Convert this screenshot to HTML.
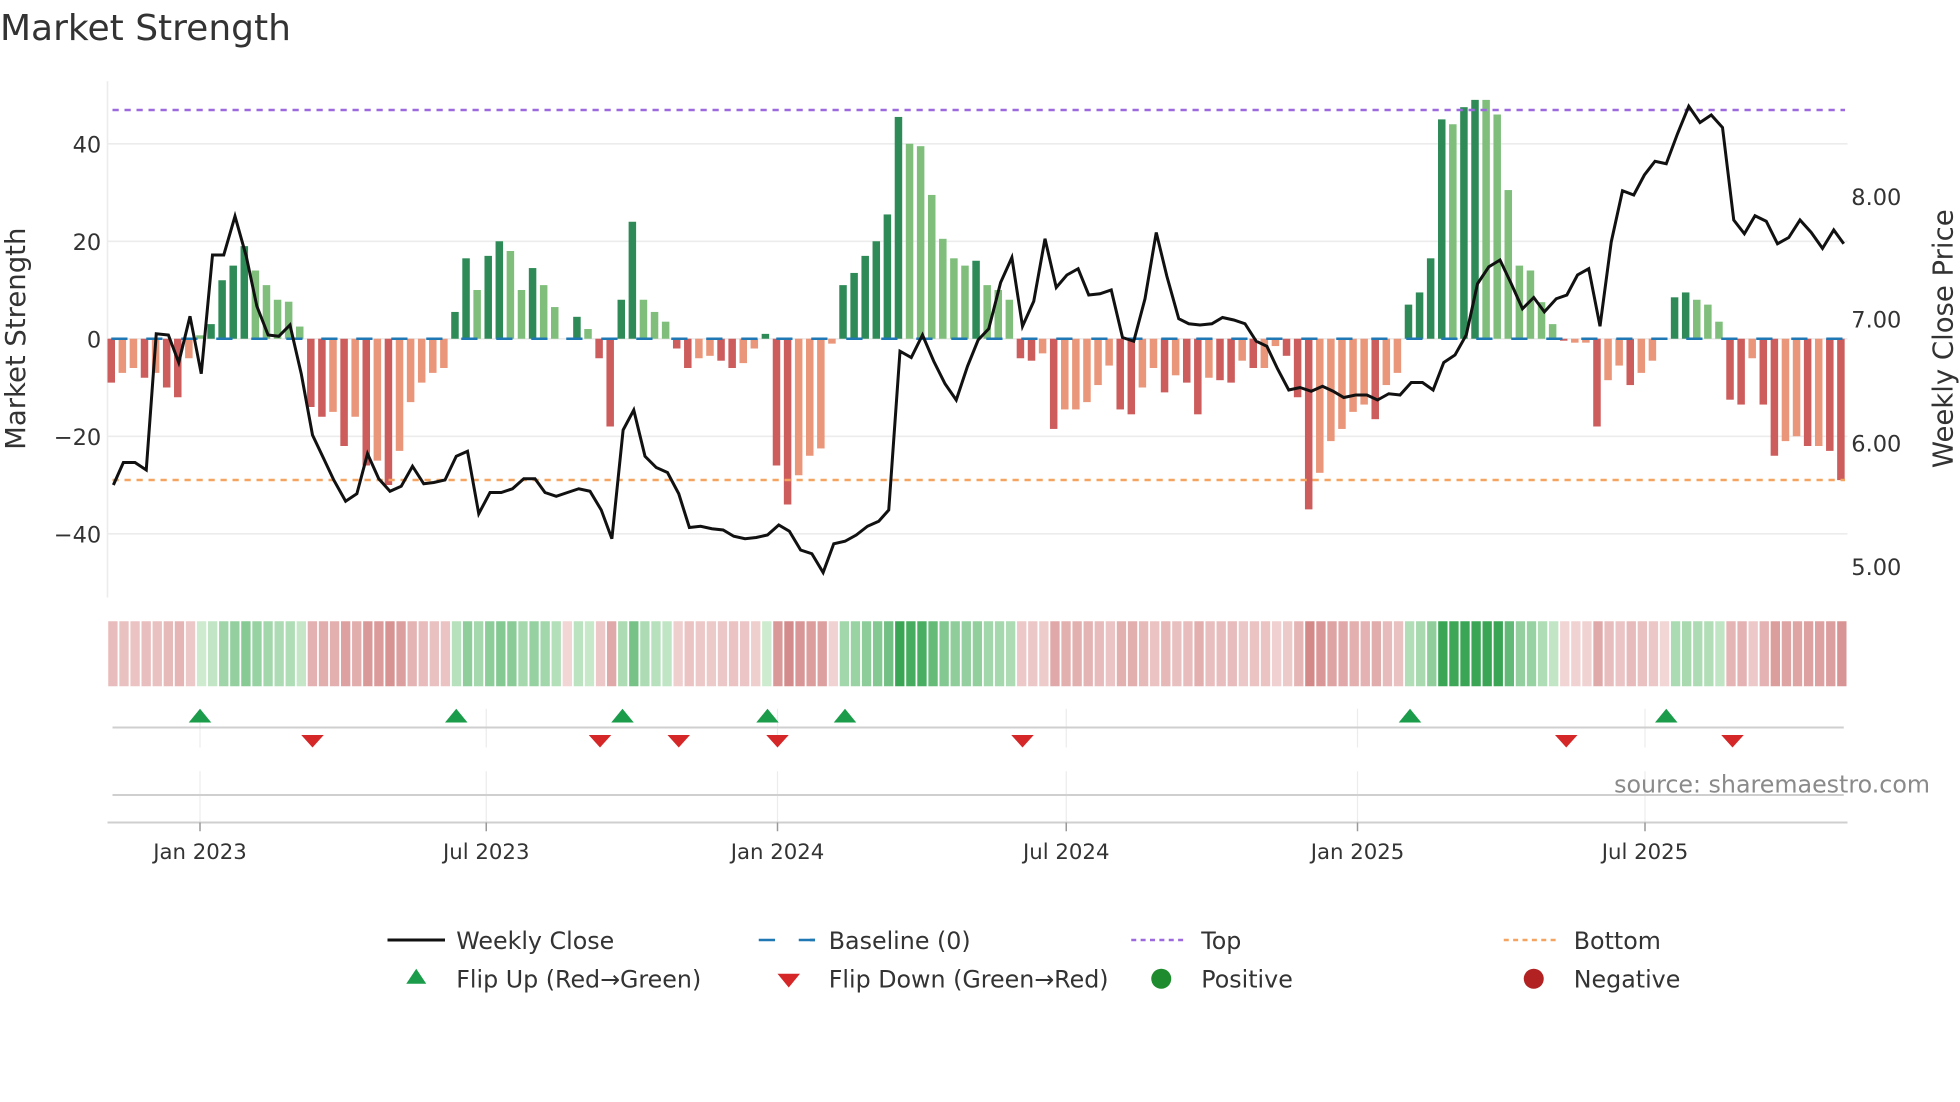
<!DOCTYPE html>
<html><head><meta charset="utf-8"><style>
html,body{margin:0;padding:0;background:#fff;}
svg{display:block;font-family:"DejaVu Sans","Liberation Sans",sans-serif;}
</style></head><body>
<svg id="s" width="1960" height="1102" viewBox="0 0 1568 881.6" xmlns="http://www.w3.org/2000/svg">
<rect width="1568" height="882" fill="#fff"/>
<text x="0" y="32" font-size="28.8" fill="#333">Market Strength</text>
<g stroke="#ececec" stroke-width="1.3">
<line x1="86" y1="115" x2="1478" y2="115"/><line x1="86" y1="193" x2="1478" y2="193"/>
<line x1="86" y1="271" x2="1478" y2="271"/><line x1="86" y1="349" x2="1478" y2="349"/>
<line x1="86" y1="427" x2="1478" y2="427"/>
<line x1="86" y1="65" x2="86" y2="478"/>
</g>
<g font-size="18" fill="#333" text-anchor="end">
<text x="81" y="122">40</text><text x="81" y="200">20</text><text x="81" y="278">0</text>
<text x="81" y="356">−20</text><text x="81" y="434">−40</text>
</g>
<g font-size="18" fill="#333">
<text x="1481" y="164">8.00</text><text x="1481" y="262">7.00</text>
<text x="1481" y="361">6.00</text><text x="1481" y="460">5.00</text>
</g>
<text transform="translate(20,271) rotate(-90)" font-size="22" fill="#333" text-anchor="middle">Market Strength</text>
<text transform="translate(1562,271) rotate(-90)" font-size="22" fill="#333" text-anchor="middle">Weekly Close Price</text>
<g id="bars"></g>
<line x1="89" y1="271" x2="1476" y2="271" stroke="#1f77b4" stroke-width="2" stroke-dasharray="13 15"/>
<line x1="90" y1="88" x2="1476" y2="88" stroke="#9c6ade" stroke-width="2" stroke-dasharray="5 4.6"/>
<line x1="90" y1="384" x2="1476" y2="384" stroke="#f4a460" stroke-width="2" stroke-dasharray="5 4.6"/>
<polyline fill="none" stroke="#111" stroke-width="2.4" stroke-linejoin="miter" points="90.7,388 98.7,370 108,370 117,376 125,267 134.7,268 143,290 152,253 161,299 170,204 179,204 188,173 197,205 205.5,245 214.5,268 223,269 232,260 241,299 250,348 259,367 267,384 276.5,401 285.5,395 294,363 303,383 312,393 321,389 330,373 339,387 347,386 356,384 365,365 374,361 383,411 392,394 401,394 410,391 419,383 428,383 436,394 445,397 454,394 463,391 472,393 481,408 489.5,431 498.5,344 507,328 516,365 525,374 534,378 543,395 551.5,422 560.5,421 569.5,423 578.5,424 587,429 596,431 605,430 614,428 623,420 631.5,425 640.5,440 649.5,443 658.5,458 667,435 676,433 685,428 694,421 703,417 711,408 720,281 729,286 738,268 747,289 756,307 765,320 774,293 782.5,272 791,263 800.5,226 809.5,206 818,261 827,241 836,191 845,230 853.5,220 862.5,215 871,236 880,235 889,232 898,270 907,273 916,239 925,186 933.5,221 943,255 951,259 960,260 969.5,259 978,254 987,256 996,259 1005,273 1013.5,277 1022,295 1031,312 1040,310 1049,313 1058,309 1066.5,313 1075,318 1084.5,316 1093.5,316 1102,320 1111,315 1120,316 1129,306 1138,306 1146.5,312 1155,290 1164,284 1173,268 1182,227 1191,213.5 1200,208 1209,227 1218,247 1227,238 1235.5,249.5 1245,239 1253.5,236 1262,220 1271,215 1280,261 1289,193.5 1298,152.6 1307,156 1315.5,140 1324,129 1333,131 1342,107 1351,85 1360,98 1369,92 1378,102 1387,176 1395.5,187 1404,172.6 1413,177 1422,195 1431,190 1440,176 1449,186 1458,198.7 1467,184 1475,195"/>
<g id="strip"></g>
<g stroke="#ececec" stroke-width="1">
<line x1="160" y1="567" x2="160" y2="598"/><line x1="389" y1="567" x2="389" y2="598"/>
<line x1="622" y1="567" x2="622" y2="598"/><line x1="853" y1="567" x2="853" y2="598"/>
<line x1="1086" y1="567" x2="1086" y2="598"/><line x1="1316" y1="567" x2="1316" y2="598"/>
<line x1="160" y1="617" x2="160" y2="658"/><line x1="389" y1="617" x2="389" y2="658"/>
<line x1="622" y1="617" x2="622" y2="658"/><line x1="853" y1="617" x2="853" y2="658"/>
<line x1="1086" y1="617" x2="1086" y2="658"/><line x1="1316" y1="617" x2="1316" y2="658"/>
</g>
<line x1="90" y1="582" x2="1475" y2="582" stroke="#cfcfcf" stroke-width="1.6"/>
<line x1="90" y1="636" x2="1475" y2="636" stroke="#cfcfcf" stroke-width="1.6"/>
<line x1="86" y1="658" x2="1478" y2="658" stroke="#cfcfcf" stroke-width="1.6"/>
<g stroke="#999" stroke-width="1.2">
<line x1="160" y1="658" x2="160" y2="665"/><line x1="389" y1="658" x2="389" y2="665"/>
<line x1="622" y1="658" x2="622" y2="665"/><line x1="853" y1="658" x2="853" y2="665"/>
<line x1="1086" y1="658" x2="1086" y2="665"/><line x1="1316" y1="658" x2="1316" y2="665"/>
</g>
<g id="mk"></g>
<text x="1544" y="634" font-size="19" fill="#8a8a8a" text-anchor="end">source: sharemaestro.com</text>
<g font-size="17" fill="#333" text-anchor="middle">
<text x="160" y="687">Jan 2023</text><text x="389" y="687">Jul 2023</text>
<text x="622" y="687">Jan 2024</text><text x="853" y="687">Jul 2024</text>
<text x="1086" y="687">Jan 2025</text><text x="1316" y="687">Jul 2025</text>
</g>
<line x1="310" y1="752" x2="356" y2="752" stroke="#111" stroke-width="2.4"/>
<line x1="607" y1="752" x2="652" y2="752" stroke="#1f77b4" stroke-width="2" stroke-dasharray="13 19"/>
<line x1="648" y1="752" x2="652" y2="752" stroke="#1f77b4" stroke-width="2"/>
<line x1="905" y1="752" x2="949" y2="752" stroke="#9c6ade" stroke-width="2" stroke-dasharray="4 3.5"/>
<line x1="1203" y1="752" x2="1248" y2="752" stroke="#f4a460" stroke-width="2" stroke-dasharray="4 3.5"/>
<path d="M325,787 L341,787 L333,775 Z" fill="#1a9c4a"/>
<path d="M622,779 L640,779 L631,790 Z" fill="#d62728"/>
<circle cx="929" cy="783" r="8" fill="#1e8c2e"/>
<circle cx="1227" cy="783" r="8" fill="#b22222"/>
<g font-size="19" fill="#333">
<text x="365" y="759">Weekly Close</text><text x="663" y="759">Baseline (0)</text>
<text x="961" y="759">Top</text><text x="1259" y="759">Bottom</text>
<text x="365" y="790">Flip Up (Red→Green)</text><text x="663" y="790">Flip Down (Green→Red)</text>
<text x="961" y="790">Positive</text><text x="1259" y="790">Negative</text>
</g>
</svg>
<script>
var D=[[-9,1],[-7,0],[-6,0],[-8,1],[-7,0],[-10,1],[-12,1],[-4,0],[0.7,0],[3,1],[12,1],[15,1],[19,1],[14,0],[11,0],[8,0],[7.6,0],[2.5,0],
[-14,1],[-16,1],[-15,0],[-22,1],[-16,0],[-26,1],[-25,0],[-30,1],[-23,0],[-13,0],[-9,0],[-7,0],[-6,0],
[5.5,1],[16.5,1],[10,0],[17,1],[20,1],[18,0],[10,0],[14.5,1],[11,0],[6.5,0],[0,0],[4.5,1],[2,0],[-4,1],[-18,1],
[8,1],[24,1],[8,0],[5.5,0],[3.5,0],[-2,1],[-6,1],[-4,0],[-3.5,0],[-4.5,1],[-6,1],[-5,0],[-2,0],[1,1],
[-26,1],[-34,1],[-28,0],[-24,0],[-22.5,0],[-1,0],
[11,1],[13.5,1],[17,1],[20,1],[25.5,1],[45.5,1],[40,0],[39.5,0],[29.5,0],[20.5,0],[16.5,0],[15,0],[16,1],[11,0],[10,0],[8,0],
[-4,1],[-4.5,1],[-3,0],[-18.5,1],[-14.5,0],[-14.5,0],[-13,0],[-9.5,0],[-5.5,0],[-14.5,1],[-15.5,1],[-10,0],[-6,0],[-11,1],[-7.5,0],[-9,1],[-15.5,1],[-8,0],[-8.5,1],[-9,1],[-4.5,0],[-6,1],[-6,0],[-1.5,0],[-3.5,1],[-12,1],[-35,1],[-27.5,0],[-21,0],[-18.5,0],[-15,0],[-13.5,0],[-16.5,1],[-9.5,0],[-7,0],
[7,1],[9.5,1],[16.5,1],[45,1],[44,0],[47.5,1],[49,1],[49,0],[46,0],[30.5,0],[15,0],[14,0],[7.5,0],[3,0],
[-0.4,1],[-0.8,0],[-0.8,0],[-18,1],[-8.5,0],[-5.5,0],[-9.5,1],[-7,0],[-4.5,0],[0,0],
[8.5,1],[9.5,1],[8,0],[7,0],[3.5,0],
[-12.5,1],[-13.5,1],[-4,0],[-13.5,1],[-24,1],[-21,0],[-20,0],[-22,1],[-22,0],[-23,1],[-29,1]];
var NS="http://www.w3.org/2000/svg";
function el(p,t,a){var e=document.createElementNS(NS,t);for(var k in a)e.setAttribute(k,a[k]);p.appendChild(e);return e;}
var bars=document.getElementById('bars'),strip=document.getElementById('strip');
function mix(a,b,t){var r=[];for(var i=0;i<3;i++)r.push(Math.round(a[i]+(b[i]-a[i])*t));return 'rgb('+r.join(',')+')';}
var n=D.length,step=1392/n;
for(var i=0;i<n;i++){
 var v=D[i][0],d=D[i][1],x=89+8.87*i;
 var col=v>=0?(d?'#2e8b57':'#7fbf7b'):(d?'#cd5c5c':'#e9967a');
 var y=271-v*3.9;
 if(Math.abs(v)>0.05) el(bars,'rect',{x:x-3,y:Math.min(y,271),width:6,height:Math.abs(271-y),fill:col});
 var t=Math.min(Math.abs(v)/45,1);
 var c=v>0.5?mix([212,238,212],[58,166,85],Math.pow(t,0.8)):mix([242,214,214],[205,120,120],Math.pow(t,0.8));
 var sx=86+step*i;
 el(strip,'rect',{x:sx+0.6,y:497,width:step-1.4,height:52,fill:c});
}
var mk=document.getElementById('mk');
[160,365,498,614,676,1128,1333].forEach(function(x){el(mk,'path',{d:'M'+(x-9)+',578 L'+(x+9)+',578 L'+x+',567 Z',fill:'#1a9c4a'});});
[250,480,543,622,818,1253,1386].forEach(function(x){el(mk,'path',{d:'M'+(x-9)+',588 L'+(x+9)+',588 L'+x+',598 Z',fill:'#d62728'});});
</script>
</body></html>
